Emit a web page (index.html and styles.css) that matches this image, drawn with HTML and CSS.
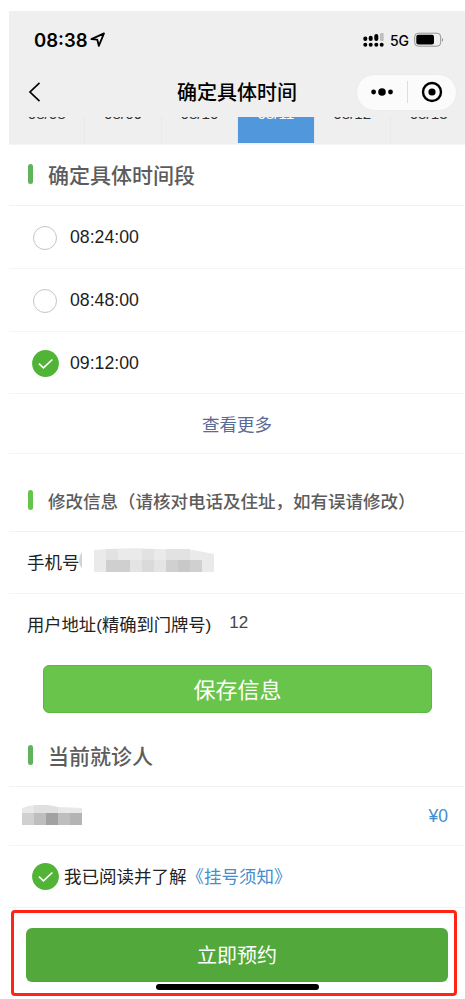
FILE: index.html
```html
<!DOCTYPE html>
<html lang="zh-CN">
<head>
<meta charset="utf-8">
<title>确定具体时间</title>
<link rel="stylesheet" href="styles.css">
</head>
<body>
<main class="phone">
  <div class="status">
    <div class="clock"><span>08:38</span>
      <svg width="16" height="16" viewBox="0 0 16 16"><path d="M1.4 7.1 L14 1.4 L8.8 13.8 L7.3 7.7 Z" fill="none" stroke="#000" stroke-width="1.8" stroke-linejoin="round"/></svg>
    </div>
    <div class="signals">
      <svg width="22" height="16" viewBox="0 0 22 16"><g stroke="#000" stroke-width="4" stroke-linecap="round"><path d="M2.3 6.6v.3M7.7 5.8v1.1M13.3 4v3"/><path d="M2.3 12.8v.01M7.7 12.8v.01M13.3 12.8v.01M18.7 12.8v.01"/></g><rect x="17" y="1" width="3.7" height="8" rx="1" fill="#bfbfbf"/></svg>
      <span class="network">5G</span>
      <svg width="30" height="16" viewBox="0 0 30 16"><rect x=".7" y="1.2" width="26" height="13" rx="3.6" fill="none" stroke="#949494"/><rect x="2.3" y="2.8" width="17.7" height="9.8" rx="2" fill="#000"/><path d="M28 5.8q1.8 2 0 4z" fill="#777"/></svg>
    </div>
  </div>
  <header class="nav">
    <svg class="back" width="14" height="22" viewBox="0 0 14 22"><path d="M12.5 1.8 L3 11 L12.5 20.2" fill="none" stroke="#000" stroke-width="1.7"/></svg>
    <h1>确定具体时间</h1>
    <div class="capsule">
      <svg width="24" height="10" viewBox="0 0 24 10"><circle cx="3.6" cy="5" r="2.4"/><circle cx="12" cy="5" r="3.8"/><circle cx="20.5" cy="5" r="2.4"/></svg>
      <i class="split"></i>
      <svg width="22" height="22" viewBox="0 0 22 22"><circle cx="11" cy="11" r="9" fill="none" stroke="#000" stroke-width="2.4"/><circle cx="11" cy="11" r="3.6"/></svg>
    </div>
  </header>
  <div class="dates">
    <span>08/08</span><span>08/09</span><span>08/10</span><span class="picked">08/11</span><span>08/12</span><span>08/13</span>
  </div>

  <h2 class="title">确定具体时间段</h2>
  <div class="row slot"><i class="radio"></i>08:24:00</div>
  <div class="row slot"><i class="radio"></i>08:48:00</div>
  <div class="row slot last">
    <svg class="tick" viewBox="0 0 27 27"><circle cx="13.5" cy="13.5" r="13.4" fill="#51b437"/><path d="M7 13.7 L11.4 17.8 L20.4 9.5" fill="none" stroke="#fff" stroke-width="1.6"/></svg>09:12:00
  </div>
  <a class="row more">查看更多</a>

  <h2 class="title edit">修改信息（请核对电话及住址，如有误请修改）</h2>
  <div class="row phone-row">
    <span>手机号</span>
    <svg class="mask" width="136" height="26" viewBox="0 0 136 26">
      <path d="M4 4Q-2 12 4 21z" fill="#d4d4d4"/>
      <path d="M16 2Q48-1 80 1L115 2L136 6V24H16z" fill="#eaeaea"/>
      <path d="M28 1H40V12H28z M64 1H76V12H64z M88 1H112V12H88z" fill="#e2e2e2"/>
      <path d="M28 12H52V24H28z" fill="#cfcfcf"/><path d="M52 12H64V24H52z M76 12H88V24H76z" fill="#e4e4e4"/><path d="M64 12H76V24H64z" fill="#dadada"/>
      <path d="M88 12H124V24H88z" fill="#d0d0d0"/><path d="M100 12H112V24H100z" fill="#c9c9c9"/>
    </svg>
  </div>
  <div class="row address"><span>用户地址(精确到门牌号)</span><span class="value">12</span></div>
  <button class="save">保存信息</button>

  <h2 class="title patient-title">当前就诊人</h2>
  <div class="row patient">
    <svg width="60" height="20" viewBox="0 0 60 20">
      <path d="M0 3Q10-1 25 0L36 2L60 3V8H0z" fill="#e8e8e8"/><path d="M12 0H25L36 2V8H12z" fill="#e0e0e0"/>
      <path d="M0 8H12V20H0z" fill="#d0d0d0"/><path d="M12 8H24V20H12z M36 8H48V20H36z" fill="#bebebe"/><path d="M24 8H36V20H24z" fill="#a2a2a2"/><path d="M48 8H60V20H48z" fill="#b4b4b4"/>
    </svg>
    <span class="price">¥0</span>
  </div>
  <div class="row agree">
    <svg class="tick" viewBox="0 0 27 27"><circle cx="13.5" cy="13.5" r="13.4" fill="#51b437"/><path d="M7 13.7 L11.4 17.8 L20.4 9.5" fill="none" stroke="#fff" stroke-width="1.6"/></svg>
    <span>我已阅读并了解</span><a>《挂号须知》</a>
  </div>
  <footer class="submit">
    <button class="book">立即预约</button>
    <i class="home-bar"></i>
  </footer>
</main>
</body>
</html>
```

FILE: styles.css
```css
* { box-sizing: border-box; }
body {
  margin: 0;
  background: #fff;
  color: #222;
  font-family: "Liberation Sans", "Noto Sans CJK SC", sans-serif;
  overflow: hidden;
}
svg { display: block; flex: none; }
h1, h2 { margin: 0; font-weight: 500; }
button { border: 0; padding: 0; display: block; color: #fff; font-family: "Noto Sans CJK SC", sans-serif; font-weight: 400; }

.phone { margin: 11px 0 0 9px; }
.status {
  height: 58px;
  display: flex;
  justify-content: space-between;
  align-items: center;
  padding: 0 21px 0 25px;
  background: #efefef;
  color: #000;
}
.clock { display: flex; align-items: center; gap: 2px; font: 600 18.5px/24px Inter, sans-serif; }
.signals { display: flex; align-items: center; }
.network { margin: 1px 5px 0 5px; font: 500 14px/20px Inter, sans-serif; }

.nav {
  height: 48px;
  display: grid;
  grid-template-columns: 91px 1fr 101px;
  align-items: center;
  padding: 0 8px 2px 18px;
  background: #efefef;
}
.nav h1 { text-align: center; font: 500 20px/30px "Noto Sans CJK SC", sans-serif; color: #000; }
.capsule {
  width: 101px;
  height: 37px;
  display: flex;
  align-items: center;
  justify-content: space-between;
  padding: 0 13px;
  border: 1px solid #ececec;
  border-radius: 19px;
  background: #fbfbfb;
}
.split { width: 1px; height: 22px; background: #ddd; }

/* The date strip is scrolled partly under the navigation bar. */
.dates {
  height: 28px;
  display: grid;
  grid-template-columns: repeat(6, 76.4px);
  overflow: hidden;
  background: #efefef;
  border-bottom: 1px solid #f4f4f4;
}
.dates span {
  height: 38px;
  margin-top: -12px;
  border-right: 1px solid #e9e9e9;
  text-align: center;
  font-size: 15.2px;
  line-height: 17px;
  color: #333;
}
.dates .picked { background: #5197db; color: #fff; }

.title {
  height: 61px;
  display: flex;
  align-items: center;
  padding: 0 0 2px 19px;
  border-bottom: 1px solid #f2f2f2;
  font-family: "Noto Sans CJK SC", sans-serif;
  font-size: 21px;
  color: #5c5c5c;
}
.title::before { content: ""; width: 5px; height: 20px; margin: 0 15px 0 0; border-radius: 3px; background: #5eb35b; }
.row { height: 63px; display: flex; align-items: center; border-bottom: 1px solid #f4f4f4; font-size: 17.5px; }
.slot { padding-left: 23px; color: #1d1d1d; font-size: 17.7px; }
.slot.last { height: 62px; padding-top: 2px; }
.radio { width: 24px; height: 24px; margin: 1px 13px 0 1px; border: 1px solid #c5c5c5; border-radius: 50%; }
.tick { width: 27px; height: 27px; margin-right: 11px; }
.more { height: 60px; padding-bottom: 1px; justify-content: center; color: #586a95; }
.title.edit { height: 78px; padding-top: 17px; font-size: 17.5px; white-space: nowrap; }
.edit::before { background: #65c54a; }
.phone-row { height: 62px; padding: 0 0 2px 18px; }
.mask { margin: -1px 0 0 -2px; }
.address { height: 71px; padding: 0 0 13px 18px; border: 0; font-size: 17.3px; }
.value { margin-left: 18px; color: #444; font-size: 17px; }
.save {
  width: 389px;
  height: 48px;
  margin-left: 34px;
  border: 1px solid #5bb941;
  border-radius: 6px;
  background: #69c44c;
  font-size: 22px;
  line-height: 42px;
  padding-bottom: 3px;
}
.patient-title { height: 74px; padding-top: 13px; }
.patient { height: 59px; justify-content: space-between; padding: 0 17px 0 13px; }
.patient svg { margin-top: -2px; }
.price { color: #458dcc; }
.agree { height: 62px; padding-left: 23px; }
.agree .tick { margin-right: 5px; }
.agree span, .agree a { padding-bottom: 2px; }
.agree a { color: #458dcc; }

.submit {
  position: relative;
  width: 446px;
  height: 86px;
  margin: 2px 0 0 2px;
  padding: 15px 6px 0 12px;
  border: 3px solid #ff2414;
  border-radius: 4px;
}
.book { width: 422px; height: 54px; border-radius: 6px; background: #52a83a; font-size: 20px; line-height: 52px; }
.home-bar { position: absolute; left: 142px; top: 71px; width: 163px; height: 6px; border-radius: 3px; background: #000; }
```
